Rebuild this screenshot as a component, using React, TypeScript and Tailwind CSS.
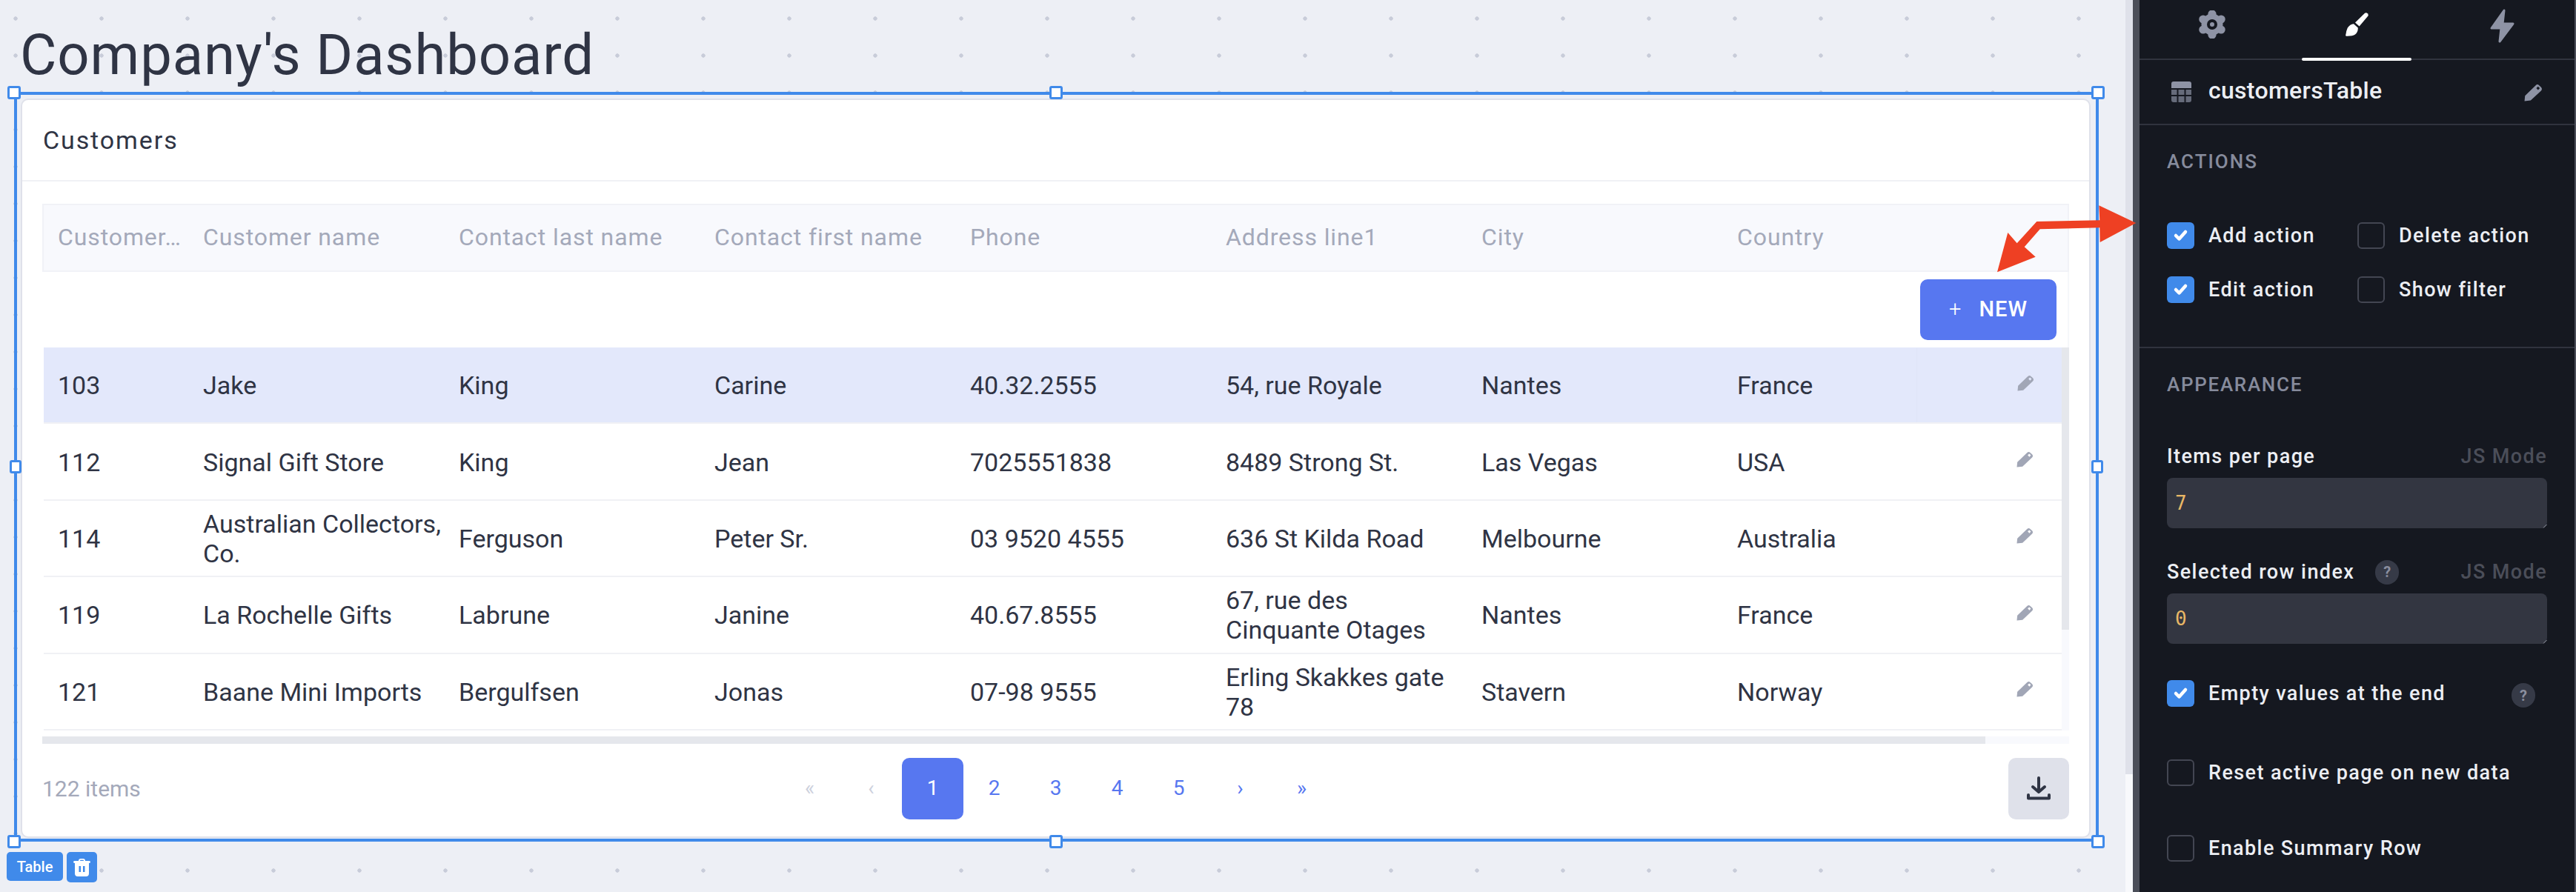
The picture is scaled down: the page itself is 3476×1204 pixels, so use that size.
import { Fragment } from 'react';

const columns = ['Customer…', 'Customer name', 'Contact last name', 'Contact first name', 'Phone', 'Address line1', 'City', 'Country'];

const customers = [
  ['103', 'Jake', 'King', 'Carine', '40.32.2555', '54, rue Royale', 'Nantes', 'France'],
  ['112', 'Signal Gift Store', 'King', 'Jean', '7025551838', '8489 Strong St.', 'Las Vegas', 'USA'],
  ['114', 'Australian Collectors, Co.', 'Ferguson', 'Peter Sr.', '03 9520 4555', '636 St Kilda Road', 'Melbourne', 'Australia'],
  ['119', 'La Rochelle Gifts', 'Labrune', 'Janine', '40.67.8555', '67, rue des Cinquante Otages', 'Nantes', 'France'],
  ['121', 'Baane Mini Imports', 'Bergulfsen', 'Jonas', '07-98 9555', 'Erling Skakkes gate 78', 'Stavern', 'Norway'],
];

const pages = [
  { label: '«', color: 'text-[#cdd1dd]' },
  { label: '‹', color: 'text-[#cdd1dd]' },
  { label: '1', color: 'text-white bg-[#5777f0] rounded-[10px]' },
  { label: '2', color: 'text-[#5777f0]' },
  { label: '3', color: 'text-[#5777f0]' },
  { label: '4', color: 'text-[#5777f0]' },
  { label: '5', color: 'text-[#5777f0]' },
  { label: '›', color: 'text-[#5777f0]' },
  { label: '»', color: 'text-[#5777f0]' },
];

const gridCols = 'grid grid-cols-[196px_345px_345px_345px_345px_345px_345px_261px_196px]';

function Pencil({ className }: { className: string }) {
  return (
    <svg viewBox="0 0 24 24" className={className} fill="currentColor">
      <path
        fillRule="evenodd"
        d="M0.5 23.5 L1.2 16.5 L15 3 Q17.2 1 19.4 3 L22 5.6 Q24 7.8 22 10 L8.5 22.6 Z M15.8 6.6 L18 4.6 L20.3 6.8 L18.1 9 Z"
      />
    </svg>
  );
}

function Check() {
  return (
    <svg viewBox="0 0 37 36" className="h-full w-full">
      <path d="M12 18 L16.5 22.5 L25 13" fill="none" stroke="white" strokeWidth="4.5" strokeLinecap="round" strokeLinejoin="round" />
    </svg>
  );
}

function Checkbox({ checked, label, className = '' }: { checked?: boolean; label: string; className?: string }) {
  return (
    <div className={`flex items-center ${className}`}>
      <div className={`h-[36px] w-[37px] shrink-0 rounded-[6px] ${checked ? 'bg-[#408aea]' : 'border-2 border-[#434652]'}`}>
        {checked && <Check />}
      </div>
      <span className="ml-[19px] text-[27px] leading-[36px] font-medium tracking-[1.4px] text-[#eceef3]">{label}</span>
    </div>
  );
}

function Help({ className = '' }: { className?: string }) {
  return (
    <span className={`flex h-[33px] w-[32px] items-center justify-center rounded-full bg-[#363a47] text-[20px] font-bold text-[#8b8f9f] ${className}`}>?</span>
  );
}

function CodeInput({ value }: { value: string }) {
  return (
    <div className="relative mt-[13px] flex h-[68px] items-center rounded-[8px] bg-[#333641] pl-[11px] text-[26px] text-[#e9b866] [font-family:'DejaVu_Sans_Mono',monospace]">
      {value}
      <svg viewBox="0 0 6 6" className="absolute bottom-0 right-0 h-[6px] w-[6px]">
        <path d="M1 5.5 L5.5 1" stroke="#9a9eaa" strokeWidth="1" />
      </svg>
    </div>
  );
}

function Handle({ className }: { className: string }) {
  return <div className={`absolute rounded-[3px] border-[3px] border-[#408aea] bg-white ${className}`} />;
}

function Gear() {
  const lobes = [0, 60, 120, 180, 240, 300];
  return (
    <svg viewBox="-19 -19 38 38" className="h-[38px] w-[38px]" fill="#8e93a5">
      {lobes.map((a) => (
        <circle key={a} cx={14 * Math.sin((a * Math.PI) / 180)} cy={-14 * Math.cos((a * Math.PI) / 180)} r="5.6" />
      ))}
      <circle r="14.5" />
      <circle r="7" fill="#151820" />
      <circle r="3" />
    </svg>
  );
}

function Brush() {
  return (
    <svg viewBox="0 0 31 32" className="h-[32px] w-[31px]" fill="white">
      <path d="M26 0.8 Q28 -0.4 29.8 1.2 Q31.4 3 30 5 L18.6 18.6 L13 13.6 Z" />
      <path d="M11 15.2 L16.8 20.4 Q17 26 13 29.6 Q9.5 32 1 31.8 Q-0.4 31 0.4 29.4 Q1 24.6 2.8 20.6 Q6 15.6 11 15.2 Z" />
    </svg>
  );
}

function Bolt() {
  return (
    <svg viewBox="-2 -2 35 46" className="h-[46px] w-[35px]" fill="#8e93a5" stroke="#8e93a5" strokeWidth="3" strokeLinejoin="round">
      <path d="M18 0 L1 24 L14 24 L12 42 L30 18 L16 18 Z" />
    </svg>
  );
}

function TableIcon() {
  return (
    <svg viewBox="0 0 27 28" className="h-[28px] w-[27px]">
      <path d="M3 0 H24 Q27 0 27 3 V9 H0 V3 Q0 0 3 0 Z" fill="#8e93a5" />
      <g fill="#666b7a">
        <rect x="0" y="11" width="7.5" height="7" />
        <rect x="9.5" y="11" width="8" height="7" />
        <rect x="19.5" y="11" width="7.5" height="7" />
        <path d="M0 20 H7.5 V28 H3 Q0 28 0 25 Z" />
        <rect x="9.5" y="20" width="8" height="8" />
        <path d="M19.5 20 H27 V25 Q27 28 24 28 H19.5 Z" />
      </g>
    </svg>
  );
}

function Trash() {
  return (
    <svg viewBox="0 0 23 24" className="h-[24px] w-[23px]" fill="white">
      <path fillRule="evenodd" d="M7 3 Q7 0 10 0 H13 Q16 0 16 3 H21.5 Q23 3 23 4.6 Q23 6 21.5 6 H21 V20 Q21 24 17 24 H6 Q2 24 2 20 V6 H1.5 Q0 6 0 4.6 Q0 3 1.5 3 Z M9 3 H14 Q14 1.8 13 1.8 H10 Q9 1.8 9 3 Z M7.5 10 V18 H10 V10 Z M13 10 V18 H15.5 V10 Z" />
    </svg>
  );
}

export default function App() {
  return (
    <div className="relative flex h-[1204px] w-[3476px] overflow-hidden text-[#2f3444] [font-family:Roboto,sans-serif]">
      {/* Canvas */}
      <div className="h-full w-[2868px] shrink-0 bg-[#edeff5] bg-[radial-gradient(circle,#c8ccd9_2.4px,transparent_3px)] bg-[size:116px_50px] bg-[position:-37px_0px]">
        <div className="flex h-[124px] items-end pb-[5px] pl-[27px]">
          <h1 className="text-[76px] leading-[90px] font-normal tracking-[0.9px] text-[#2f3444]">Company's Dashboard</h1>
        </div>

        {/* Selected widget */}
        <div className="relative ml-[19px] h-[1012px] w-[2813px] border-[4px] border-[#408aea] pb-[1px] pl-[5px] pr-[7px] pt-[5px]">
          <Handle className="left-[-13px] top-[-12px] h-[18px] w-[18px]" />
          <Handle className="left-[1393px] top-[-12px] h-[18px] w-[18px]" />
          <Handle className="right-[-12px] top-[-12px] h-[18px] w-[18px]" />
          <Handle className="left-[-10px] top-[493px] h-[18px] w-[16px]" />
          <Handle className="right-[-10px] top-[493px] h-[18px] w-[16px]" />
          <Handle className="bottom-[-13px] left-[-13px] h-[18px] w-[18px]" />
          <Handle className="bottom-[-13px] left-[1393px] h-[18px] w-[18px]" />
          <Handle className="bottom-[-13px] right-[-12px] h-[18px] w-[18px]" />

          <div className="h-full rounded-[10px] border-2 border-[#dfe1ea] bg-white">
            <div className="flex h-[110px] items-center border-b-2 border-[#f0f1f5] pl-[28px] text-[34px] font-normal tracking-[1.9px]">Customers</div>

            <div className="ml-[27px] mt-[30px] w-[2735px]">
              {/* Table head */}
              <div className={`${gridCols} h-[92px] items-center border-x-2 border-b-2 border-t-2 border-[#f1f2f7] bg-[#f8f9fd] pb-[3px] text-[32px] tracking-[0.9px] text-[#a4a9ba]`}>
                {columns.map((column) => (
                  <div key={column} className="whitespace-nowrap pl-[19px]">{column}</div>
                ))}
              </div>

              {/* Toolbar */}
              <div className="flex h-[102px] items-start justify-end border-r-2 border-[#f6f7fa] pr-[15px] pt-[10px]">
                <button className="flex h-[82px] w-[184px] items-center justify-center gap-[23px] rounded-[10px] bg-[#5777f0] text-[29px] font-medium tracking-[1px] text-white">
                  <span className="font-light">+</span>
                  <span>NEW</span>
                </button>
              </div>

              {/* Rows */}
              <div className="relative w-[2735px] pl-[2px] pr-[10px]">
                <div className="absolute right-0 top-0 h-[517px] w-[10px] bg-[#f8f9fd]" />
                <div className="absolute right-0 top-0 h-[381px] w-[10px] bg-[#e5e7ec]" />
                {customers.map((row, i) => (
                  <div key={row[0]} className={`${gridCols} h-[103.4px] items-center border-b-2 border-[#f0f1f5] pt-[1px] text-[34px] leading-[40px] ${i === 0 ? 'border-[#e3e8fb] bg-[#e3e8fb]' : ''}`}>
                    {row.map((cell, j) => (
                      <div key={j} className="pl-[19px] pr-[4px]">{cell}</div>
                    ))}
                    <div className={`flex h-full items-center pl-[135px] pb-[8px] ${i === 0 ? 'border-l border-[#e0e5f8]' : ''}`}>
                      <Pencil className="h-[23px] w-[23px] text-[#a1a6b6]" />
                    </div>
                  </div>
                ))}
                <div className="h-[8px]" />
              </div>
              <div className="flex h-[10px]">
                <div className="w-[2622px] bg-[#e5e7ec]" />
                <div className="flex-1 bg-[#f8f9fd]" />
              </div>

              {/* Footer */}
              <div className="mt-[19px] grid h-[83px] grid-cols-[1fr_auto_1fr] items-center">
                <span className="text-[30px] text-[#a4a9ba]">122 items</span>
                <div className="flex">
                  {pages.map((page) => (
                    <Fragment key={page.label}>
                      <div className={`flex h-[83px] w-[83px] items-center justify-center text-[28px] ${page.color}`}>{page.label}</div>
                    </Fragment>
                  ))}
                </div>
                <div className="flex justify-end">
                  <button className="flex h-[83px] w-[82px] items-center justify-center rounded-[10px] bg-[#dfe1ea]">
                    <svg viewBox="0 0 32 32" className="h-[32px] w-[32px]" fill="none" stroke="#2f3444" strokeWidth="4" strokeLinecap="round" strokeLinejoin="round">
                      <path d="M16 2 V21 M8 14 L16 21 L24 14" />
                      <path d="M2 25 V29.5 H30 V25" />
                    </svg>
                  </button>
                </div>
              </div>
            </div>
          </div>
        </div>

        {/* Widget label */}
        <div className="ml-[9px] mt-[14px] flex gap-[5px]">
          <div className="flex h-[39px] w-[76px] items-center justify-center rounded-[5px] bg-[#408aea] text-[20px] font-medium text-white">Table</div>
          <div className="flex h-[41px] w-[41px] items-center justify-center rounded-[5px] bg-[#408aea]">
            <Trash />
          </div>
        </div>
      </div>

      {/* Canvas scrollbar */}
      <div className="h-full w-[10px] shrink-0 bg-[#f8f9fc]">
        <div className="h-[1045px] bg-[#dfe1ea]" />
      </div>

      {/* Properties panel */}
      <div className="h-full w-[598px] shrink-0 border-x-[9px] border-r-2 border-[#4b4e59] bg-[#151820] text-white">
        <div className="relative flex h-[81px] border-b-2 border-[#30333e]">
          <div className="flex w-[196px] items-center justify-center pb-[14px] pl-[1px]"><Gear /></div>
          <div className="flex w-[196px] items-center justify-center pb-[14px]"><Brush /></div>
          <div className="flex w-[196px] items-center justify-center pb-[10px]"><Bolt /></div>
          <div className="absolute left-[219px] top-[78px] h-[4px] w-[148px] rounded-full bg-white" />
        </div>

        <div className="flex h-[88px] items-center border-b-2 border-[#30333e] pl-[43px] pr-[43px]">
          <TableIcon />
          <span className="ml-[23px] flex-1 pb-[5px] text-[32px] font-medium tracking-[0.3px] text-[#eceef3]">customersTable</span>
          <Pencil className="h-[25px] w-[25px] text-[#8e93a5]" />
        </div>

        <div className="h-[301px] border-b-2 border-[#30333e] px-[37px] pt-[33px]">
          <div className="flex h-[32px] items-center text-[26px] font-medium tracking-[2px] text-[#868b9c]">ACTIONS</div>
          <div className="mt-[66px] grid grid-cols-[257px_1fr] gap-y-[37px]">
            <Checkbox checked label="Add action" />
            <Checkbox label="Delete action" />
            <Checkbox checked label="Edit action" />
            <Checkbox label="Show filter" />
          </div>
        </div>

        <div className="px-[37px] pt-[33px]">
          <div className="flex h-[32px] items-center text-[26px] font-medium tracking-[1.7px] text-[#868b9c]">APPEARANCE</div>

          <div className="mt-[65px] flex h-[32px] items-center justify-between">
            <span className="text-[27px] font-medium tracking-[1.4px] text-[#eceef3]">Items per page</span>
            <span className="text-[27px] font-medium tracking-[1.4px] text-[#4b4e59]">JS Mode</span>
          </div>
          <CodeInput value="7" />

          <div className="mt-[43px] flex h-[32px] items-center">
            <span className="text-[27px] font-medium tracking-[1.4px] text-[#eceef3]">Selected row index</span>
            <Help className="ml-[28px]" />
            <span className="ml-auto text-[27px] font-medium tracking-[1.4px] text-[#4b4e59]">JS Mode</span>
          </div>
          <CodeInput value="0" />

          <div className="mt-[47px] flex items-center">
            <Checkbox checked label="Empty values at the end" />
            <Help className="ml-auto mr-[16px] mt-[6px]" />
          </div>
          <Checkbox label="Reset active page on new data" className="mt-[70px]" />
          <Checkbox label="Enable Summary Row" className="mt-[66px]" />
        </div>
      </div>

      {/* Annotation arrow */}
      <svg viewBox="0 0 200 100" className="absolute left-[2690px] top-[270px] h-[100px] w-[200px]">
        <polygon
          fill="#ee4023"
          points="192.3,31 142.3,7.3 143.3,27.3 58.3,29 31.7,58.3 19.3,44 5,97.3 56.7,76.7 41.7,63.3 62.7,39.3 143.3,37.3 143.7,57"
        />
      </svg>
    </div>
  );
}
